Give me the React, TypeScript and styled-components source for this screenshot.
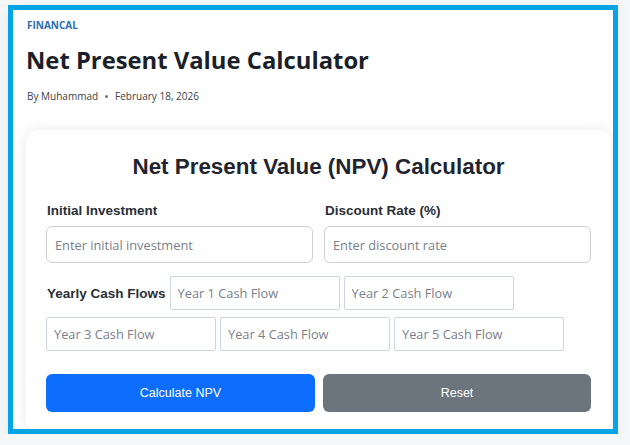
import React from "react";
import styled, { createGlobalStyle } from "styled-components";

const Global = createGlobalStyle`
  html, body { margin: 0; padding: 0; }
  body { background: #f6f7f8; font-family: "Open Sans", "Liberation Sans", sans-serif; }
  * { box-sizing: border-box; }
`;

const Frame = styled.div`
  margin: 5px 0 0 8px;
  width: 610px;
  height: 429px;
  border: 5px solid #04a4e6;
  background: #ffffff;
  overflow: hidden;
  padding: 0 0 0 13px;
  box-shadow: 0 4px 14px rgba(0, 0, 0, 0.06);
`;

const Category = styled.div`
  margin-top: 9px;
  padding-left: 1px;
  font-family: "Open Sans", sans-serif;
  font-weight: 700;
  font-size: 10px;
  line-height: 12px;
  color: #2c6cb3;
  text-transform: uppercase;
`;

const Title = styled.h1`
  margin: 13px 0 0 0;
  font-family: "Open Sans", sans-serif;
  font-weight: 700;
  font-size: 23.8px;
  line-height: 32px;
  color: #1b1f2a;
`;

const Byline = styled.div`
  margin-top: 13px;
  padding-left: 1px;
  font-family: "Open Sans", sans-serif;
  font-size: 10px;
  line-height: 14px;
  color: #3a3f48;
  display: flex;
  align-items: center;
  gap: 7px;
`;

const Dot = styled.span`
  width: 3px;
  height: 3px;
  border-radius: 50%;
  background: #6b7280;
`;

const Card = styled.div`
  margin-top: 27px;
  width: 585px;
  border-radius: 12px;
  background: #fff;
  box-shadow: 0 0 14px rgba(0, 0, 0, 0.09);
  padding: 24px 20px 20px 20px;
  font-family: "Liberation Sans", Arial, sans-serif;
`;

const Heading = styled.h2`
  margin: 0;
  text-align: center;
  font-size: 22.4px;
  line-height: 26px;
  font-weight: 700;
  color: #1f2430;
`;

const TwoCol = styled.div`
  margin-top: 22px;
  display: grid;
  grid-template-columns: 267px 267px;
  column-gap: 11px;
`;

const Field = styled.div`
  display: flex;
  flex-direction: column;
  gap: 7px;
`;

const Label = styled.label`
  font-size: 13.5px;
  line-height: 17px;
  font-weight: 700;
  color: #2b2f36;
  padding-left: 1px;
`;

const BigInput = styled.input`
  height: 37px;
  width: 100%;
  border: 1px solid #cfcfcf;
  border-radius: 6px;
  padding: 0 8px;
  font-family: "Open Sans", sans-serif;
  font-size: 12.8px;
  color: #333;
  background: #fff;
  outline: none;
  &::placeholder { color: #7a808b; }
`;

const Flows = styled.div`
  margin-top: 13px;
  display: flex;
  flex-wrap: wrap;
  align-items: center;
  column-gap: 4px;
  row-gap: 7px;
`;

const FlowLabel = styled.span`
  font-size: 13.5px;
  font-weight: 700;
  color: #2b2f36;
  padding-left: 1px;
`;

const FlowInput = styled.input`
  width: 170px;
  height: 34px;
  border: 1px solid #cdd5df;
  border-radius: 2px;
  padding: 0 7px;
  font-family: "Open Sans", sans-serif;
  font-size: 12.8px;
  background: #fff;
  outline: none;
  &::placeholder { color: #7a808b; }
`;

const Buttons = styled.div`
  margin-top: 23px;
  display: grid;
  grid-template-columns: 269px 268px;
  column-gap: 8px;
`;

const Button = styled.button<{ $variant: "primary" | "secondary" }>`
  height: 38px;
  border: none;
  border-radius: 6px;
  background: ${(p) => (p.$variant === "primary" ? "#0d6efd" : "#6c757d")};
  color: #fff;
  font-family: "Liberation Sans", Arial, sans-serif;
  font-size: 12.5px;
  cursor: pointer;
`;

export default function App() {
  return (
    <>
      <Global />
      <Frame>
        <Category>Financal</Category>
        <Title>Net Present Value Calculator</Title>
        <Byline>
          <span>By Muhammad</span>
          <Dot />
          <span>February 18, 2026</span>
        </Byline>
        <Card>
          <Heading>Net Present Value (NPV) Calculator</Heading>
          <TwoCol>
            <Field>
              <Label>Initial Investment</Label>
              <BigInput placeholder="Enter initial investment" />
            </Field>
            <Field>
              <Label>Discount Rate (%)</Label>
              <BigInput placeholder="Enter discount rate" />
            </Field>
          </TwoCol>
          <Flows>
            <FlowLabel>Yearly Cash Flows</FlowLabel>
            {[1, 2, 3, 4, 5].map((y) => (
              <FlowInput key={y} placeholder={`Year ${y} Cash Flow`} />
            ))}
          </Flows>
          <Buttons>
            <Button $variant="primary">Calculate NPV</Button>
            <Button $variant="secondary">Reset</Button>
          </Buttons>
        </Card>
      </Frame>
    </>
  );
}
